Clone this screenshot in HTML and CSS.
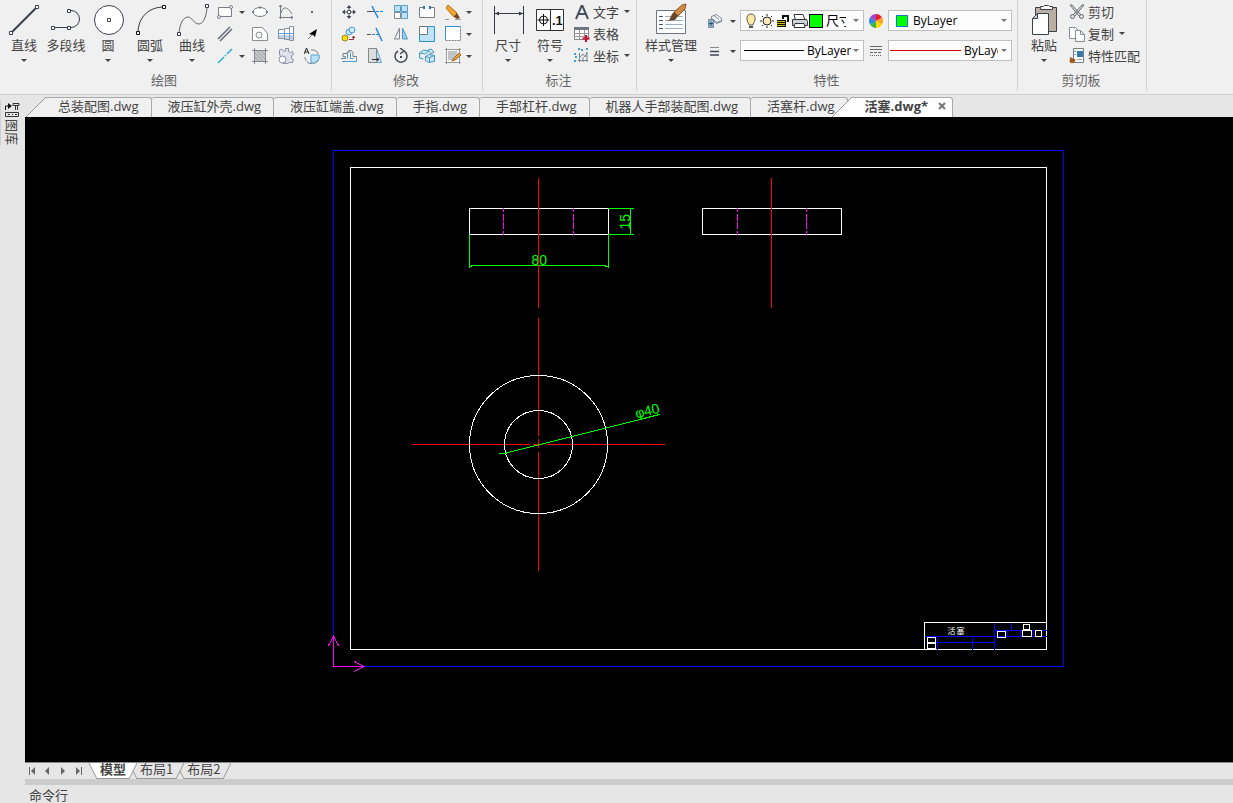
FILE: index.html
```html
<!DOCTYPE html>
<html lang="zh-CN">
<head>
  <meta charset="UTF-8">
  <meta name="viewport" content="width=device-width, initial-scale=1.0">
  <title>活塞.dwg</title>
  <link rel="stylesheet" href="styles.css">
</head>
<body>

  <!-- Ribbon -->
  <header class="ribbon">

    <section class="group">
      <div class="tools">
        <button class="big">
          <svg width="34" height="36" fill="#fff" stroke="#3a3f4a"><path d="M4 31L30 5" stroke-width="2"/><path d="M2.500 29.500h3v3h-3zM28.500 3.500h3v3h-3z"/></svg>
          直线<i class="caret"></i>
        </button>
        <button class="big">
          <svg width="34" height="36" fill="#fff" stroke="#3a3f4a"><path d="M4 25.500H22a8 8 0 0 0 0-17H20" fill="none"/><path d="M2.500 24.500h3v3h-3zM18.500 24.500h3v3h-3zM18.500 7.500h3v3h-3z"/></svg>
          多段线
        </button>
        <button class="big">
          <svg width="34" height="36" fill="#fff" stroke="#3a3f4a"><circle cx="18" cy="18" r="14.500"/><path d="M16.500 16.500h3v3h-3z"/></svg>
          圆<i class="caret"></i>
        </button>
        <button class="big">
          <svg width="34" height="36" fill="#fff" stroke="#111"><path d="M5 31C5 16 15 5 31 5" fill="none" stroke="#333"/><path d="M3.500 29.500h3v3h-3zM29.500 3.500h3v3h-3z"/></svg>
          圆弧<i class="caret"></i>
        </button>
        <button class="big">
          <svg width="34" height="36" fill="#fff" stroke="#3a3f4a"><path d="M4 31C5 20 9 15 13 15S19 22 24 22 32 12 32 4" fill="none" stroke="#666"/><path d="M2.500 30.500h3v3h-3zM30.500 2.500h3v3h-3z"/></svg>
          曲线<i class="caret"></i>
        </button>
        <div class="grid draw-grid">
          <button class="small lead" aria-label="矩形"><svg width="16" height="16" fill="#fff" stroke="#777d86"><path d="M1.500 3.500h13v9h-13z"/><circle cx="14" cy="3" r="1.500"/><circle cx="2" cy="13" r="1.500"/></svg><i class="caret"></i></button>
          <button class="small" aria-label="椭圆"><svg width="16" height="16" fill="#fff" stroke="#777d86"><ellipse cx="8" cy="8" rx="7" ry="4.500"/><path d="M7 3h2v1H7zM0 7.500h2v1H0zM14 7.500h2v1h-2z" fill="#555"/></svg></button>
          <button class="small" aria-label="函数曲线"><svg width="16" height="16" fill="none" stroke="#777d86"><path d="M2.500 1v14M1 13.500h14M1 3l1.500-2L4 3M13 12l2 1.500-2 1.500M3 9C5 2 9 2 14 10"/></svg></button>
          <button class="small" aria-label="点"><svg width="16" height="16"><path d="M7 7h2v2H7z" fill="#666a75"/></svg></button>
          <button class="small lead" aria-label="双线"><svg width="16" height="16" stroke="#666a75" stroke-width="1.500"><path d="M1 13L13 1M3 15L15 3"/></svg></button>
          <button class="small" aria-label="多边形"><svg width="16" height="16" fill="#fff" stroke="#888c94"><path d="M.500 1.500h10l5 6v7h-15z"/><circle cx="7" cy="9" r="3"/></svg></button>
          <button class="small" aria-label="轴"><svg width="16" height="16" fill="#fff" stroke="#8a909c"><path d="M.500 3.500h6v9h-6zM6.500 2.500h5v11h-5zM11.500.500h4v14h-4z"/><path d="M1 9h5v3H1zM7 9h4v4H7zM12 9h3v5h-3z" fill="#bcd3ec" stroke="none"/><path d="M0 7.500h16" stroke="#5a9ee0"/></svg></button>
          <button class="small" aria-label="箭头"><svg width="16" height="16"><path d="M4 13L10 7" stroke="#777"/><path d="M13 3l-2 8-2-2-4-1z" fill="#000"/></svg></button>
          <button class="small lead" aria-label="中心线"><svg width="16" height="16" stroke="#28aee4" stroke-width="1.500"><path d="M1 15L7 9M8 8l1-1M10 6l5-5"/></svg><i class="caret"></i></button>
          <button class="small" aria-label="剖面线"><svg width="16" height="16" fill="#c2c4c8" stroke="#84878e"><path d="M2.500 2.500h11v11h-11z"/><path d="M3 5l8 8M3 9l4 4M5 3l8 8M9 3l4 4" stroke="#a4a7ac"/><path d="M2.500 0v16M13.500 0v16M0 2.500h16M0 13.500h16" fill="none"/></svg></button>
          <button class="small" aria-label="齿轮"><svg width="16" height="16" fill="#dfe2ec" stroke="#8990a0"><path d="M1.500 6V2l2-1 2 2h2V.500h3v3l2 1 2-1 1 3-2 1v3l2 1-1 3h-3l-2 1H5z"/><circle cx="4.500" cy="11.500" r="3.500" fill="#fff"/></svg></button>
          <button class="small" aria-label="局部放大"><svg width="16" height="16" fill="none" stroke="#777d86"><path d="M7 2a7 7 0 1 1-6 7" stroke-dasharray="9 1"/><path d="M7 7h8c1 5-3 8-8 8z" fill="#bde3fb" stroke="#55a8da"/><path d="M0 6L2.500 0 5 6M1 4h3" stroke="#222"/></svg></button>
        </div>
      </div>
      <h2>绘图</h2>
    </section>

    <section class="group">
      <div class="tools">
        <div class="grid edit-grid">
          <button class="small" aria-label="移动"><svg width="16" height="16" fill="#444a54"><path d="M6.500 6.500h3v3h-3z" fill="#fff" stroke="#555"/><path d="M8 1l2.500 3h-2v2h-1V4h-2zM8 15l-2.500-3h2v-2h1v2h2zM1 8l3-2.500v2h2v1H4v2zM15 8l-3 2.500v-2h-2v-1h2v-2z"/></svg></button>
          <button class="small" aria-label="裁剪"><svg width="16" height="16" fill="none" stroke="#2b86d2"><path d="M5 2l6 12" stroke-width="1.500"/><path d="M0 7.500h7" stroke="#555"/><path d="M9 7.500h7" stroke-dasharray="3 1"/></svg></button>
          <button class="small" aria-label="阵列"><svg width="16" height="16" fill="#bde3fb" stroke="#5a9dc5"><path d="M1.500 1.500h6v6h-6zM8.500 1.500h6v6h-6zM8.500 8.500h6v6h-6z"/><path d="M1.500 8.500h6v6h-6z" fill="#fff" stroke="#888"/></svg></button>
          <button class="small" aria-label="打断"><svg width="16" height="16" fill="#fff" stroke="#777d86"><path d="M5 3.500H.500v10h15v-10H11"/><path d="M4 2h2v3H4zM10 2h2v3h-2z" fill="#2679bd" stroke="none"/></svg></button>
          <button class="small" aria-label="擦除"><svg width="16" height="16"><path d="M0 15.500h4M10 15.500h6" stroke="#999"/><path d="M1 4l2-3 9 8-3 4z" fill="#f4a62b" stroke="#b16c16"/><path d="M9 13l3-4 3 5-3 1z" fill="#754526"/></svg></button><i class="caret"></i>
          <button class="small" aria-label="复制"><svg width="16" height="16"><circle cx="4" cy="12" r="3" fill="#ffdf00" stroke="#948a24"/><g fill="#cbe9fc" stroke="#4a9ad0"><circle cx="8" cy="6" r="3"/><circle cx="11" cy="4" r="3"/></g><path d="M8 13.500h4.500v-3M11 12l1.500-2 1.500 2" fill="none" stroke="#9d3030"/></svg></button>
          <button class="small" aria-label="延伸"><svg width="16" height="16" fill="none" stroke="#2b86d2"><path d="M9 2l6 13" stroke-width="1.500"/><path d="M0 8.500h4" stroke="#555"/><path d="M5 8.500h7" stroke-dasharray="3 1"/></svg></button>
          <button class="small" aria-label="镜像"><svg width="16" height="16" stroke="#7f8790"><path d="M6.500 2v11h-5z" fill="#eee"/><path d="M9.500 2v11h5z" fill="#9fcef0" stroke="#4b99c6"/></svg></button>
          <button class="small" aria-label="缩放"><svg width="16" height="16" stroke="#2e94cf"><path d="M.500.500h15v15H.500z" fill="#bde3fb"/><path d="M.500.500h8v8h-8z" fill="#fff" stroke="#777"/></svg></button>
          <button class="small" aria-label="拉伸"><svg width="16" height="16"><path d="M.500.500h15v14h-15z" fill="#fff" stroke="#777" stroke-dasharray="2 1"/><path d="M.500 14V.500H15" fill="none" stroke="#2e94cf"/></svg></button><i class="caret"></i>
          <button class="small" aria-label="偏移"><svg width="16" height="16" fill="none" stroke="#777d86"><path d="M0 10.500h4.500V8.500H2V5.500h4c0-4 6-4 6 0v3h3.500v2"/><path d="M1 13.500h14.500v-3M6.500 10.500v-5c0-2 3-2 3 0v5h3" stroke="#4f9bc9"/></svg></button>
          <button class="small" aria-label="拔模"><svg width="16" height="16"><path d="M1.500.500h8l5 14h-13z" fill="#c9e9fb" stroke="#58a3cf"/><path d="M1.500.500h8v14h-8z" fill="#dcdde0" stroke="#888"/><path d="M5 11.500h7M10 10l2 1.500-2 1.500" fill="none" stroke="#333"/></svg></button>
          <button class="small" aria-label="旋转"><svg width="16" height="16" fill="none" stroke="#444a54" stroke-width="1.500"><path d="M5 3a6 6 0 1 0 6 0M7 0l4 3-4 3"/><path d="M7 8h2v2H7z" fill="#444" stroke="none"/></svg></button>
          <button class="small" aria-label="分解"><svg width="16" height="16" fill="#c9e9fb" stroke="#4796c2"><path d="M.500 5l4-3 5 1-3 3zM.500 5v5l4 1M9 2l3-1 3 3-3 2zM6.500 8.500l3-2 6 1v6l-6 1-3-2zM6.500 8.500l4 1 5-2M10.500 9.500v5"/></svg></button>
          <button class="small" aria-label="编辑剖面"><svg width="16" height="16"><path d="M1.500 1.500h13v13h-13z" fill="#f7f7f7" stroke="#777"/><path d="M3 3h9v9H3z" fill="#bfc3c8"/><path d="M0 1.500h16M1.500 0v16M14.500 0v16M0 14.500h16" stroke="#999"/><path d="M8 11l6-6 2 2-6 5-3 1z" fill="#eea338" stroke="#9c631c"/></svg></button><i class="caret"></i>
        </div>
      </div>
      <h2>修改</h2>
    </section>

    <section class="group">
      <div class="tools">
        <button class="big">
          <svg width="34" height="36" fill="#333a45" stroke="#333a45"><path d="M3.500 4v28M32.500 4v28M4 11.500h28"/><path d="M4 11.500l4-2v4zM32 11.500l-4-2v4z" stroke="none"/></svg>
          尺寸<i class="caret"></i>
        </button>
        <button class="big">
          <svg width="34" height="36"><path d="M3.500 7.500h27v21h-27zM17.500 7.500v21" fill="#fff" stroke="#333"/><circle cx="10.500" cy="18" r="4" fill="none" stroke="#111"/><path d="M10.500 12v12M4.500 18h12" stroke="#111"/><text class="tol" x="19" y="23">.1</text></svg>
          符号<i class="caret"></i>
        </button>
        <div class="list">
          <button class="line"><svg width="16" height="16" fill="none" stroke="#474f5c" stroke-width="2"><path d="M2 15L7.500 2h1L14 15M4 10h8"/></svg>文字<i class="caret"></i></button>
          <button class="line"><svg width="16" height="16"><path d="M.500 1.500h14v12H.500z" fill="#fff" stroke="#888"/><path d="M0 1h15v3H0z" fill="#6f7782"/><path d="M5.500 4v10M10.500 4v10M1 7.500h13M1 10.500h13" stroke="#999"/><path d="M12 9v7M8.500 12.500h7" stroke="#c8102e" stroke-width="2"/></svg>表格</button>
          <button class="line"><svg width="16" height="16" fill="none" stroke="#7d838e"><path d="M5.500 5v9M4 12.500h10M6 9l3-3 2 3 2-5v10M9 9v5"/><path d="M0 6h2M1 9h2M0 13h2M4 1h2M7 2h2M12 1h2" stroke="#469bd0" stroke-width="2"/></svg>坐标<i class="caret"></i></button>
        </div>
      </div>
      <h2>标注</h2>
    </section>

    <section class="group props">
      <div class="tools">
        <button class="big wide">
          <svg width="34" height="36"><path d="M2.500 8.500h29v23h-29z" fill="#fff" stroke="#6b7784"/><path d="M5 14.500h4M5 18.500h4M5 22.500h4M5 26.500h4" stroke="#456"/><path d="M11 14.500h18M11 18.500h18M11 22.500h18M11 26.500h18" stroke="#9ab0c4"/><path d="M28 3l4-1-1 5-7 7-4-4z" fill="#d08a42" stroke="#8b5423"/><path d="M20 10l4 4-3 4-7 1c3-2 2-6 6-9z" fill="#68452b"/></svg>
          样式管理<i class="caret"></i>
        </button>
        <div class="prop-grid">
          <button class="small" aria-label="图层"><svg width="18" height="16" fill="#f3f4f6" stroke="#7c8795"><path d="M5.500 3.500l5-2 5 4v3l-5 2-5-4z"/><path d="M6 5.500l5 4 5-2M8 2.500l5 4" fill="none"/><path d="M2.500 6.500h5v8h-5z" fill="#8fb1d2"/><path d="M3 10.500h4M5 9v4" stroke="#26547e"/></svg><i class="caret"></i></button>
          <div class="combo">
            <svg width="14" height="16"><path d="M5 11C2 8 2 1 7 1s5 7 2 10v1H5z" fill="#ffeaa3" stroke="#555"/><path d="M5 13h4v2H5z" fill="#555"/></svg>
            <svg width="16" height="16" stroke="#222"><circle cx="8" cy="8" r="4" fill="#ffe9b8"/><path d="M8 1v2M8 13v2M1 8h2M13 8h2M3 3l1 1M12 12l1 1M13 3l-1 1M3 13l1-1"/></svg>
            <svg width="14" height="16"><path d="M7 6V3h5v6" fill="none" stroke="#111" stroke-width="2"/><path d="M1 7h9v7H1z" fill="#111"/><path d="M1 8.500h8M1 10.500h8M1 12.500h8" stroke="#c8bc10"/></svg>
            <svg width="17" height="16" fill="#fff" stroke="#333"><path d="M4.500 7L3 1.500h9l2 5.500"/><path d="M1.500 6.500h14l1 2v4h-15z" fill="#ccd3dd"/><path d="M4 10.500h9l1 4H3z"/></svg>
            <span class="swatch dark"></span>
            <select aria-label="当前图层" class="layer-name"><option>尺寸线层</option></select>
            <i class="caret"></i>
          </div>
          <span class="cell"><svg width="14" height="14" viewBox="0 0 14 14"><path d="M7 7V0a7 7 0 0 1 6 3.500z" fill="#e51f2e"/><path d="M7 7l6-3.500a7 7 0 0 1 0 7z" fill="#ffa41c"/><path d="M7 7l6 3.500A7 7 0 0 1 7 14z" fill="#ffdc00"/><path d="M7 7v7a7 7 0 0 1-6-3.500z" fill="#39b54a"/><path d="M7 7l-6 3.500a7 7 0 0 1 0-7z" fill="#2986e2"/><path d="M7 7L1 3.500A7 7 0 0 1 7 0z" fill="#a842c9"/></svg></span>
          <div class="combo color">
            <span class="swatch"></span>
            <select aria-label="颜色"><option>ByLayer</option></select>
            <i class="caret"></i>
          </div>
          <button class="small" aria-label="线宽"><svg width="18" height="16"><path d="M4 4.500h9" stroke="#888"/><path d="M4 8.500h9M4 12h9" stroke="#3e4653" stroke-width="1.500"/></svg><i class="caret"></i></button>
          <div class="combo">
            <span class="sample"></span>
            <select aria-label="线宽"><option>ByLayer</option></select>
            <i class="caret"></i>
          </div>
          <span class="cell"><svg width="12" height="12" stroke="#666"><path d="M0 1.500h12M0 4.500h12"/><path d="M0 7.500h12" stroke-dasharray="3 1"/><path d="M0 10.500h12" stroke-dasharray="1 1"/></svg></span>
          <div class="combo linetype">
            <span class="sample red"></span>
            <select aria-label="线型"><option>ByLayer</option></select>
            <i class="caret"></i>
          </div>
        </div>
      </div>
      <h2>特性</h2>
    </section>

    <section class="group">
      <div class="tools">
        <button class="big clip">
          <svg width="34" height="36" stroke="#3c4149"><path d="M8.500 5.500h21v24h-21z" fill="#b9afa2"/><path d="M13.500 7.500v-3h3l1-1h4l1 1h3v3z" fill="#fff"/><path d="M10.500 11.500h11v21h-16v-16z" fill="#fff"/><path d="M5.500 16.500h5v-5z" fill="#ccd4de"/></svg>
          粘贴<i class="caret"></i>
        </button>
        <div class="list">
          <button class="line"><svg width="16" height="16" fill="#e6e8eb" stroke="#61666d"><path d="M1 1l2 0 10 11-2 1zM15 1h-2L3 12l2 1z"/><circle cx="3.500" cy="12.500" r="2"/><circle cx="12.500" cy="12.500" r="2"/></svg>剪切</button>
          <button class="line"><svg width="16" height="16" fill="#fff" stroke="#868c96"><path d="M.500 1.500h6l3 3v8h-9z"/><path d="M6.500 4.500h5l4 4v7h-9zM11.500 4.500v4h4"/></svg>复制<i class="caret"></i></button>
          <button class="line"><svg width="16" height="16"><path d="M4.500.500h10v14h-10z" fill="#fff" stroke="#75808c"/><path d="M8 3h6v6H8z" fill="#3779ad"/><path d="M5 3.500h2M5 6.500h2M8 11.500h5" stroke="#85a3c0"/><path d="M1 9l4 2c2 0 2 1 1 2s-2 3-4 2-2-2-1-3z" fill="#a05a20"/></svg>特性匹配</button>
        </div>
      </div>
      <h2>剪切板</h2>
    </section>
  </header>

  <div class="workspace">
    <aside class="dock">
      <button class="dock-tab">
        <svg width="16" height="18" fill="none" stroke="#333"><path d="M1.500 9V5h5" stroke="#111"/><path d="M4 2l4 3-4 3z" fill="#111" stroke="none"/><path d="M9 2.500h6v2H9zM11.500 5v4M13.500 5v4M1.500 11.500h13v4h-13zM4 13.500h2M8 13.500h1M11 13.500h2"/></svg>
        <span>图库</span>
      </button>
    </aside>

    <main class="editor">
      <!-- Open drawings -->
      <nav class="tabs">
        <svg class="slant" width="20" height="20"><path d="M0 20L20 0V20z" fill="#f0f0f0"/><path d="M0 20L20 0" stroke="#999"/></svg>
        <button class="tab first">总装配图.dwg</button>
        <button class="tab">液压缸外壳.dwg</button>
        <button class="tab">液压缸端盖.dwg</button>
        <button class="tab">手指.dwg</button>
        <button class="tab">手部杠杆.dwg</button>
        <button class="tab">机器人手部装配图.dwg</button>
        <button class="tab">活塞杆.dwg</button>
        <svg class="slant over" width="20" height="20"><path d="M0 20L20 0V20z" fill="#fff"/><path d="M0 20L20 0" stroke="#999"/></svg>
        <button class="tab active">活塞.dwg*<svg width="8" height="8" stroke="#777" stroke-width="2"><path d="M1 1l6 6M7 1L1 7"/></svg></button>
      </nav>

      <!-- Drawing area -->
      <svg class="canvas" role="img" aria-label="活塞">
        <g transform="translate(-24.500 -116.500)" fill="none" stroke-linecap="square" shape-rendering="crispEdges">
          <path d="M333 150H1063V666H333z" stroke="#00f"/>
          <path d="M350 167H1046V649H350z" stroke="#fff"/>

          <!-- front view -->
          <path d="M469 208H608V234H469z" stroke="#fff"/>
          <path d="M503 208v3m0 3v6m0 2v6m0 3v3M573 208v3m0 3v6m0 2v6m0 3v3" stroke="#f0f"/>
          <path d="M608 208h25M608 234h25M630 208v26M469 234v33M608 234v33M471 265H605M469 266h2M605 266h2" stroke="#0f0"/>
          <text class="dim" x="531" y="264">80</text>
          <text class="dim" transform="translate(629 229) rotate(-90)">15</text>
          <path d="M538 178V307" stroke="#f00"/>

          <!-- side view -->
          <path d="M702 208H841V234H702z" stroke="#fff"/>
          <path d="M737 208v3m0 3v6m0 2v6m0 3v3M806 208v3m0 3v6m0 2v6m0 3v3" stroke="#f0f"/>
          <path d="M771 178V307" stroke="#f00"/>

          <!-- top view -->
          <path d="M538 318V435M538 439v8M538 452V570M412 444H529M533 444h9M547 444H664" stroke="#f00"/>
          <circle cx="538" cy="444" r="69" stroke="#fff"/>
          <circle cx="538" cy="444" r="34" stroke="#fff"/>
          <path d="M504 453L659 414M499 453h6" stroke="#0f0"/>
          <text class="dim" transform="translate(636 418) rotate(-14)">φ40</text>

          <!-- title block -->
          <path d="M924 636H1046M924 642h70M937 636v13M972 636v13M994 622v27M994 630h52M1011 622v8M1007 630v6M1020 630v6M1033 630v6" stroke="#00f"/>
          <path d="M924 649V622H1046M927 637h8v5h-8zM927 643h8v5h-8zM997 631h8v6h-8zM1023 624h6v5h-6zM1022 630h9v6h-9zM1035 630h6v6h-6z" stroke="#fff"/>
          <text class="part" x="947" y="633">活</text>
          <text class="part" x="956" y="633">塞</text>

          <!-- axes -->
          <path d="M333 636V666H363M328 645l5-9 5 9M354 661l9 5-9 5" stroke="#f0f"/>
        </g>
      </svg>

      <!-- Model / layout tabs -->
      <nav class="layouts">
        <button class="step" aria-label="第一个"><svg width="8" height="8" fill="#666"><path d="M1 0h1v8H1zM7 0v8L3 4z"/></svg></button>
        <button class="step" aria-label="上一个"><svg width="8" height="8" fill="#666"><path d="M6 0v8L2 4z"/></svg></button>
        <button class="step" aria-label="下一个"><svg width="8" height="8" fill="#666"><path d="M2 0v8l4-4z"/></svg></button>
        <button class="step" aria-label="最后一个"><svg width="8" height="8" fill="#666"><path d="M6 0h1v8H6zM1 0v8l4-4z"/></svg></button>
        <svg class="edge" width="8" height="16"><path d="M0 0H8V16z" fill="#fff"/><path d="M0 0l8 16" stroke="#999"/></svg>
        <button class="layout active">模型</button>
        <svg width="8" height="16"><path d="M0 0H8L0 16z" fill="#fff"/><path d="M8 0L0 16M4 8l4 8" stroke="#999"/></svg>
        <button class="layout">布局1</button>
        <svg width="8" height="16"><path d="M8 0L0 16M4 8l4 8" stroke="#999"/></svg>
        <button class="layout">布局2</button>
        <svg width="8" height="16"><path d="M8 0L0 16" stroke="#999"/></svg>
      </nav>

      <footer class="command">命令行</footer>
    </main>
  </div>

</body>
</html>
```
FILE: styles.css
```css
* {
  box-sizing: border-box;
}

body {
  margin: 0;
  height: 100vh;
  display: flex;
  flex-direction: column;
  overflow: hidden;
  background: #e6e6e6;
  color: #444;
  font-family: "Noto Sans CJK SC", sans-serif;
  font-size: 13px;
  line-height: 16px;
}

button {
  margin: 0;
  padding: 0;
  border: none;
  background: none;
  color: inherit;
  font: inherit;
  white-space: nowrap;
}

svg {
  display: block;
  flex: none;
}

.caret {
  flex: none;
  width: 0;
  height: 0;
  border: 3px solid transparent;
  border-top-color: #444;
  border-bottom: none;
}

/* ribbon */
.ribbon {
  flex: none;
  display: flex;
  height: 95px;
  padding-bottom: 3px;
  background: #f0f0f0;
  border-bottom: 1px solid #d0d0d0;
}

.group {
  flex: none;
  padding: 1px 6px 0 4px;
  border-right: 1px solid #d4d4d4;
}

.group:first-child {
  padding-left: 3px;
}

.group.props {
  padding-right: 5px;
}

.group h2 {
  margin: 0;
  color: #666;
  font-size: 13px;
  font-weight: normal;
  line-height: 18px;
  text-align: center;
}

.tools {
  display: flex;
  height: 70px;
}

.big {
  width: 42px;
  padding-top: 1px;
  display: flex;
  flex-direction: column;
  align-items: center;
  line-height: 14px;
}

.big .caret {
  margin-top: 7px;
}

.big.wide {
  width: 60px;
}

.big.clip {
  width: 44px;
}

.grid {
  display: grid;
  grid-auto-rows: 22px;
  align-items: center;
}

.draw-grid {
  grid-template-columns: 34px 26px 26px 26px;
}

.edit-grid {
  grid-template-columns: repeat(5, 26px) 10px;
}

.small {
  display: flex;
  align-items: center;
  justify-content: center;
  gap: 6px;
  height: 22px;
}

.small.lead {
  justify-content: flex-start;
  padding-left: 4px;
}

.list {
  display: flex;
  flex-direction: column;
  padding-left: 3px;
}

.line {
  display: flex;
  align-items: center;
  gap: 3px;
  height: 22px;
  padding-bottom: 1px;
}

.line .caret {
  margin-left: 2px;
}

.tol {
  font: bold 13px "Liberation Sans", sans-serif;
  fill: #111;
}

/* property drop-downs */
.prop-grid {
  display: grid;
  grid-template-columns: 38px 124px 24px 124px;
  grid-template-rows: 21px 21px;
  row-gap: 9px;
  padding: 9px 0 0 1px;
}

.cell {
  display: flex;
  align-items: center;
  justify-content: center;
}

.combo {
  display: flex;
  align-items: center;
  gap: 1px;
  padding: 0 4px 0 3px;
  background: #fdfdfd;
  border: 1px solid #c0c0c0;
}

.combo .caret {
  margin-left: auto;
  border-top-color: #777;
}

.combo select {
  width: 44px;
  height: 17px;
  padding: 0;
  border: none;
  appearance: none;
  background: none;
  color: #000;
  font: 12px/17px "Open Sans", "Noto Sans CJK SC", sans-serif;
  text-overflow: clip;
}

.combo .layer-name {
  width: 20px;
  margin-left: 2px;
  font-size: 13px;
}

.combo.color {
  gap: 5px;
  padding-left: 7px;
}

.combo.color select {
  width: 48px;
}

.combo.linetype {
  padding-left: 1px;
}

.combo.linetype select {
  width: 34px;
}

.swatch {
  flex: none;
  width: 12px;
  height: 12px;
  background: #0f0;
  border: 1px solid #1a78c8;
}

.swatch.dark {
  width: 14px;
  height: 14px;
  border-color: #000;
}

.sample {
  flex: none;
  width: 60px;
  margin-right: 2px;
  border-top: 1px solid #000;
}

.sample.red {
  width: 71px;
  border-color: #d00;
}

/* left dock */
.workspace {
  flex: 1;
  min-height: 0;
  display: flex;
}

.dock {
  flex: none;
  width: 25px;
  padding-top: 6px;
}

.dock-tab {
  display: flex;
  flex-direction: column;
  align-items: center;
  padding-left: 3px;
  border-left: 1px solid #d0d0d0;
}

.dock-tab span {
  writing-mode: vertical-rl;
  text-orientation: sideways;
}

/* drawing tabs */
.editor {
  flex: 1;
  min-width: 0;
  display: flex;
  flex-direction: column;
}

.tabs {
  flex: none;
  display: flex;
  height: 22px;
  padding: 2px 0 0 1px;
}

.tab {
  flex: none;
  height: 20px;
  padding: 0 12px 3px 16px;
  background: #f0f0f0;
  border: 1px solid #aaa;
  border-width: 1px 1px 0 0;
  border-radius: 3px 3px 0 0;
  font-family: "Open Sans", "Noto Sans CJK SC", sans-serif;
  line-height: 16px;
}

.tab.first {
  padding-left: 12px;
  border-radius: 0 3px 0 0;
}

.slant.over {
  margin-left: -16px;
  z-index: 1;
}

.tab.active {
  display: flex;
  align-items: center;
  gap: 10px;
  padding: 0 6px 3px 13px;
  background: #fff;
  border-radius: 0 3px 0 0;
  font-weight: bold;
}

/* canvas */
.canvas {
  flex: 1;
  width: 100%;
  min-height: 0;
  background: #000;
}

.dim {
  fill: #0f0;
  font: 14px "Liberation Sans", sans-serif;
}

.part {
  fill: #fff;
  font-size: 8px;
}

/* layout tabs */
.layouts {
  flex: none;
  display: flex;
  height: 17px;
  border-top: 1px solid #888;
}

.step {
  width: 16px;
  display: flex;
  align-items: center;
  justify-content: center;
}

.step:first-child {
  width: 14px;
}

.edge {
  margin-left: 2px;
}

.layout {
  height: 16px;
  padding: 0 3px 3px;
  border-bottom: 1px solid #999;
  line-height: 12px;
}

.layout.active {
  background: #fff;
  font-weight: bold;
}

.command {
  flex: none;
  height: 24px;
  padding: 2px 4px 0;
  border-top: 6px solid #ccc;
}
```
